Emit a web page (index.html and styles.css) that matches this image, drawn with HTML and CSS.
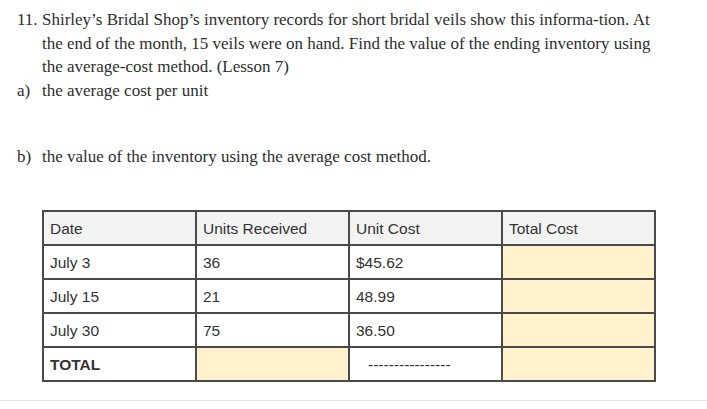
FILE: index.html
```html
<!DOCTYPE html>
<html>
<head>
<meta charset="utf-8">
<link rel="stylesheet" href="styles.css">
</head>
<body>
<div class="page">
  <div class="item q">
    <span class="num">11.</span>
    <p class="body">Shirley’s Bridal Shop’s inventory records for short bridal veils show this informa-tion. At the end of the month, 15 veils were on hand. Find the value of the ending inventory using the average-cost method. (Lesson 7)</p>
  </div>
  <div class="item a">
    <span class="num">a)</span>
    <p class="body">the average cost per unit</p>
  </div>
  <div class="item b">
    <span class="num">b)</span>
    <p class="body">the value of the inventory using the average cost method.</p>
  </div>
  <table class="inv">
    <tr class="head"><td>Date</td><td>Units Received</td><td>Unit Cost</td><td>Total Cost</td></tr>
    <tr><td>July 3</td><td>36</td><td>$45.62</td><td class="fill"></td></tr>
    <tr><td>July 15</td><td>21</td><td>48.99</td><td class="fill"></td></tr>
    <tr><td>July 30</td><td>75</td><td>36.50</td><td class="fill"></td></tr>
    <tr><td class="bold">TOTAL</td><td class="fill"></td><td class="dash">----------------</td><td class="fill"></td></tr>
  </table>
  <div class="rule"></div>
</div>
</body>
</html>
```
FILE: styles.css
```css
html, body {
  margin: 0;
  padding: 0;
  background: #fff;
}
.page {
  width: 707px;
  height: 409px;
  overflow: hidden;
  padding-top: 8px;
  box-sizing: border-box;
  font-family: "Liberation Serif", serif;
  font-size: 17px;
  color: #2e2e2e;
}
.item {
  display: flex;
  padding-left: 17px;
  padding-right: 45px;
  line-height: 23.5px;
}
.num {
  width: 25px;
  flex: none;
}
.body {
  margin: 0;
}
.b {
  margin-top: 43px;
}
.inv {
  margin-top: 41px;
  margin-left: 42px;
  border-collapse: collapse;
  width: 614px;
  font-family: "Liberation Sans", Arial, sans-serif;
  font-size: 15.5px;
  color: #333;
}
.inv td {
  border: 2px solid #4a4a4a;
  height: 34px;
  padding: 3px 6px 0;
  width: 25%;
  box-sizing: border-box;
}
.inv .head td {
  background: #f3f3f3;
}
.inv .fill {
  background: #fff2cc;
}
.inv .bold {
  font-weight: bold;
}
.inv .dash {
  padding-left: 18px;
}
.rule {
  margin-top: 18px;
  height: 1px;
  background: #e6e6e6;
}
```
